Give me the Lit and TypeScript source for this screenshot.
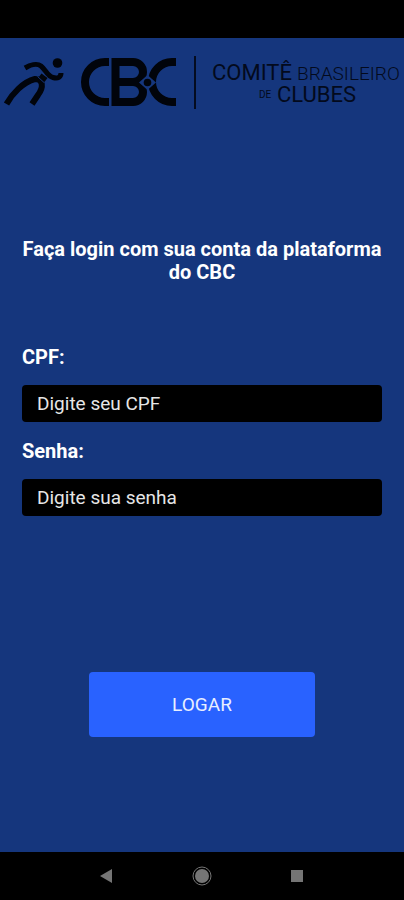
import { LitElement, html, css } from "lit";
import { customElement } from "lit/decorators.js";

@customElement("cbc-logo")
class CbcLogo extends LitElement {
  static styles = css`
    :host { display: block; }
    .logo { display: block; width: 100%; height: auto; }
    .solid { fill: #01040b; }
    .ground { fill: #15367d; }
    .seam { fill: none; stroke: #15367d; stroke-width: 1; }
    .limb { fill: none; stroke: #01040b; stroke-width: 5; stroke-linejoin: round; }
    .leg { stroke-width: 6; }
    .band { fill: none; stroke: #01040b; stroke-width: 8; }
    .rule { stroke: #040c20; stroke-width: 2; }
    .word { font-family: Roboto, "Liberation Sans", sans-serif; fill: #030a1c; font-size: 22px; font-weight: 400; }
    .light { font-size: 19px; font-weight: 300; }
    .small { font-size: 10px; font-weight: 400; }
  `;

  render() {
    return html`
      <svg class="logo" viewBox="0 0 404 76" role="img" aria-label="CBC, Comitê Brasileiro de Clubes">
        <circle class="solid" cx="57.5" cy="25" r="4.8" />
        <path class="limb" d="M25 30C30 27 37 25 41 28C46 32 47 38 53 39.500C58 41 61 39 61 35" />
        <path class="limb leg" d="M6.500 66C12 56 23 44 35 41C43 41 44 49 38 57L32 66" />
        <path class="limb" d="M40 37.500L46 42" />
        <path class="seam" d="M37.500 38.500L44 44.500" />
        <path class="band" d="M109 24H105A20 20 0 0 0 105 64H109" />
        <path class="band" d="M115.500 20V68M112 24H133A10 10 0 0 1 133 44H117M133 44A10 10 0 0 1 133 64H112" />
        <path class="seam" d="M110.500 19V69" />
        <path class="band" d="M176 24H172A20 20 0 0 0 172 64H176" />
        <path class="ground" d="M147.500 37L156 44.500L147.500 52L139 44.500Z" />
        <circle class="solid" cx="147.500" cy="44.500" r="3.800" />
        <line class="rule" x1="195" y1="18" x2="195" y2="71" />
        <text class="word" x="212" y="42">COMITÊ</text>
        <text class="word light" x="297" y="42">BRASILEIRO</text>
        <text class="word small" x="259" y="60">DE</text>
        <text class="word" x="277" y="64">CLUBES</text>
      </svg>
    `;
  }
}

@customElement("app-root")
class AppRoot extends LitElement {
  static styles = css`
    :host {
      display: flex;
      flex-direction: column;
      min-height: 100vh;
      background: #15367d;
      color: #fff;
      font-family: Roboto, "Liberation Sans", sans-serif;
      font-size: 19px;
      line-height: 23px;
    }
    .status { height: 38px; background: #000; }
    .page { flex: 1; display: flex; flex-direction: column; }
    .title {
      margin: 124px 22px 0;
      font-size: 20px;
      line-height: 23px;
      font-weight: 700;
      text-align: center;
    }
    .form { display: flex; flex-direction: column; margin: 62px 22px 0; }
    .label { font-size: 20px; font-weight: 700; margin-bottom: 16px; }
    .input {
      box-sizing: border-box;
      width: 100%;
      height: 37px;
      margin: 0 0 18px;
      padding: 0 15px;
      border: 0;
      border-radius: 4px;
      background: #000;
      color: #fff;
      font: inherit;
    }
    .input::placeholder { color: #e6e6e6; opacity: 1; }
    .submit {
      align-self: center;
      width: 63%;
      height: 65px;
      margin-top: 138px;
      border: 0;
      border-radius: 4px;
      background: #2962ff;
      color: #e8eeff;
      font: inherit;
    }
    .nav {
      display: flex;
      justify-content: space-between;
      align-items: center;
      height: 48px;
      padding: 0 92px;
      background: #000;
    }
    .key { display: flex; padding: 0; border: 0; background: none; }
    .glyph { width: 24px; height: 24px; fill: #757575; }
    .ring { fill: none; stroke: #757575; stroke-width: 1; }
  `;

  render() {
    return html`
      <div class="status"></div>
      <main class="page">
        <cbc-logo></cbc-logo>
        <h1 class="title">Faça login com sua conta da plataforma do CBC</h1>
        <form class="form" @submit=${(e: Event) => e.preventDefault()}>
          <label class="label" for="cpf">CPF:</label>
          <input class="input" id="cpf" type="text" inputmode="numeric" placeholder="Digite seu CPF" />
          <label class="label" for="senha">Senha:</label>
          <input class="input" id="senha" type="password" placeholder="Digite sua senha" />
          <button class="submit" type="submit">LOGAR</button>
        </form>
      </main>
      <nav class="nav">
        <button class="key" aria-label="Voltar">
          <svg class="glyph" viewBox="0 0 24 24"><path d="M8 12L20 5V19Z" /></svg>
        </button>
        <button class="key" aria-label="Início">
          <svg class="glyph" viewBox="0 0 24 24">
            <circle cx="12" cy="12" r="7" />
            <circle class="ring" cx="12" cy="12" r="9" />
          </svg>
        </button>
        <button class="key" aria-label="Recentes">
          <svg class="glyph" viewBox="0 0 24 24"><rect x="3" y="6" width="12" height="12" /></svg>
        </button>
      </nav>
    `;
  }
}
